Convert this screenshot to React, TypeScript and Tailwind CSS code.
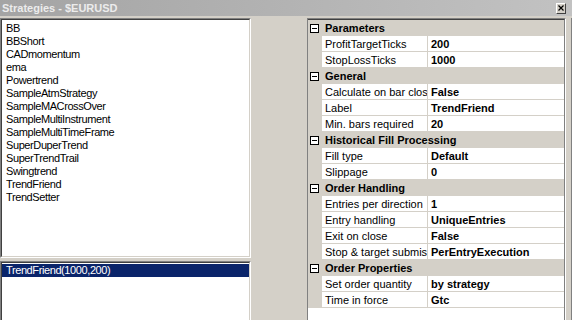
const strategies = [
  "BB",
  "BBShort",
  "CADmomentum",
  "ema",
  "Powertrend",
  "SampleAtmStrategy",
  "SampleMACrossOver",
  "SampleMultiInstrument",
  "SampleMultiTimeFrame",
  "SuperDuperTrend",
  "SuperTrendTrail",
  "Swingtrend",
  "TrendFriend",
  "TrendSetter",
];

const groups = [
  {
    title: "Parameters",
    rows: [
      ["ProfitTargetTicks", "200"],
      ["StopLossTicks", "1000"],
    ],
  },
  {
    title: "General",
    rows: [
      ["Calculate on bar close", "False"],
      ["Label", "TrendFriend"],
      ["Min. bars required", "20"],
    ],
  },
  {
    title: "Historical Fill Processing",
    rows: [
      ["Fill type", "Default"],
      ["Slippage", "0"],
    ],
  },
  {
    title: "Order Handling",
    rows: [
      ["Entries per direction", "1"],
      ["Entry handling", "UniqueEntries"],
      ["Exit on close", "False"],
      ["Stop & target submission", "PerEntryExecution"],
    ],
  },
  {
    title: "Order Properties",
    rows: [
      ["Set order quantity", "by strategy"],
      ["Time in force", "Gtc"],
    ],
  },
];

function MinusBox() {
  return (
    <svg width="9" height="9" viewBox="0 0 9 9" className="shrink-0">
      <rect x="0.5" y="0.5" width="8" height="8" fill="#ffffff" stroke="#000000" />
      <line x1="2" y1="4.5" x2="7" y2="4.5" stroke="#000000" />
    </svg>
  );
}

export default function App() {
  return (
    <div className="w-[572px] h-[320px] overflow-hidden bg-[#d4d0c8] flex flex-col font-['Liberation_Sans',Arial,sans-serif] text-[11px] text-black">
      {/* Title bar */}
      <div className="h-[16px] shrink-0 flex items-center justify-between pl-[2px] pr-[6px] bg-gradient-to-r from-[#a4a4a4] to-[#c2c2c2]">
        <span className="font-bold text-[11px] leading-none text-[#ececec] pt-[1px]">Strategies - $EURUSD</span>
        <div className="w-[10px] h-[11px] flex items-center justify-center bg-[#d4d0c8] border-t border-l border-white border-b border-r border-b-[#404040] border-r-[#404040]">
          <svg width="6" height="6" viewBox="0 0 6 6">
            <path d="M0.5 0.5 L5.5 5.5 M5.5 0.5 L0.5 5.5" stroke="#000" strokeWidth="1.2" />
          </svg>
        </div>
      </div>

      <div className="flex-1 flex pt-[2px] min-h-0">
        {/* Left column: strategy list + selected instance */}
        <div className="w-[251px] shrink-0 flex flex-col">
          <div className="h-[240px] shrink-0 border-t border-l border-[#808080] border-b border-r border-b-white border-r-white">
            <div className="h-full bg-white border-t border-l border-[#404040] border-b border-r border-b-[#d4d0c8] border-r-[#d4d0c8] pt-[2px] tracking-[-0.4px]">
              {strategies.map((s) => (
                <div key={s} className="h-[13px] leading-[13px] pl-[4px] whitespace-nowrap">
                  {s}
                </div>
              ))}
            </div>
          </div>
          <div className="mt-[3px] flex-1 border-t border-l border-[#808080] border-r border-r-white">
            <div className="h-full bg-white border-t border-l border-[#404040] border-r border-r-[#d4d0c8] pt-[1px]">
              <div className="h-[13px] leading-[13px] bg-[#0a246a] text-white pl-[4px] tracking-[-0.4px]">
                TrendFriend(1000,200)
              </div>
            </div>
          </div>
        </div>

        <div className="w-[56px] shrink-0" />

        {/* Property grid */}
        <div className="w-[259px] shrink-0 border-t border-l border-[#808080] border-r border-r-white">
          <div className="h-full bg-white border-t border-[#404040] border-r border-r-[#808080]">
            {groups.map((g) => (
              <div key={g.title}>
                <div className="h-[16px] flex items-center bg-[#d4d0c8] pl-[2px]">
                  <MinusBox />
                  <span className="ml-[6px] pt-[1px] font-bold whitespace-nowrap leading-none">{g.title}</span>
                </div>
                {g.rows.map(([name, value]) => (
                  <div key={name} className="h-[16px] flex">
                    <div className="w-[14px] shrink-0 bg-[#d4d0c8]" />
                    <div className="w-[106px] shrink-0 border-b border-r border-[#d4d0c8] pl-[3px] pt-[1px] flex items-center overflow-hidden whitespace-nowrap leading-none">
                      {name}
                    </div>
                    <div className="flex-1 border-b border-[#d4d0c8] pl-[3px] pt-[1px] flex items-center font-bold whitespace-nowrap leading-none">
                      {value}
                    </div>
                  </div>
                ))}
              </div>
            ))}
          </div>
        </div>

        <div className="flex-1 border-r border-[#808080]" />
      </div>
    </div>
  );
}
